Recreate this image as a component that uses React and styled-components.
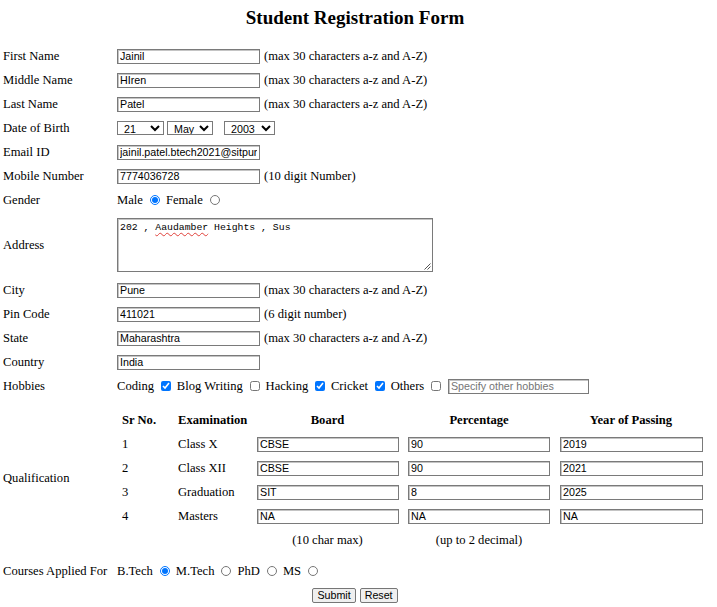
import styled, { createGlobalStyle } from "styled-components";

const GlobalStyle = createGlobalStyle`
  html, body {
    margin: 0;
    padding: 0;
    background: #ffffff;
  }

  body {
    font-family: "Liberation Serif", "Times New Roman", serif;
    font-size: 12.6px;
    color: #000000;
  }
`;

const nameHint = "(max 30 characters a-z and A-Z)";

const qualifications = [
  { no: 1, exam: "Class X", board: "CBSE", percent: "90", year: "2019" },
  { no: 2, exam: "Class XII", board: "CBSE", percent: "90", year: "2021" },
  { no: 3, exam: "Graduation", board: "SIT", percent: "8", year: "2025" },
  { no: 4, exam: "Masters", board: "NA", percent: "NA", year: "NA" },
];

function App() {
  return (
    <>
      <GlobalStyle />
      <Page>
        <Title>Student Registration Form</Title>
        <Form onSubmit={ev => ev.preventDefault()}>
          <Label>First Name</Label>
          <Field>
            <TextInput defaultValue="Jainil" />
            <Hint>{nameHint}</Hint>
          </Field>

          <Label>Middle Name</Label>
          <Field>
            <TextInput defaultValue="HIren" />
            <Hint>{nameHint}</Hint>
          </Field>

          <Label>Last Name</Label>
          <Field>
            <TextInput defaultValue="Patel" />
            <Hint>{nameHint}</Hint>
          </Field>

          <Label>Date of Birth</Label>
          <Field>
            <Select $width={47} defaultValue="21">
              <option>21</option>
            </Select>
            <Select $width={46} $left={3} defaultValue="May">
              <option>May</option>
            </Select>
            <Select $width={51} $left={11} defaultValue="2003">
              <option>2003</option>
            </Select>
          </Field>

          <Label>Email ID</Label>
          <Field>
            <TextInput defaultValue="jainil.patel.btech2021@sitpune.edu.in" />
          </Field>

          <Label>Mobile Number</Label>
          <Field>
            <TextInput defaultValue="7774036728" />
            <Hint>(10 digit Number)</Hint>
          </Field>

          <Label>Gender</Label>
          <Field>
            <Choice>Male</Choice>
            <Radio name="gender" defaultChecked />
            <Choice>Female</Choice>
            <Radio name="gender" />
          </Field>

          <Label>Address</Label>
          <Field $pad="6px 0">
            <AddressBox role="textbox">
              202 , <Misspelled>Aaudamber</Misspelled> Heights , Sus
              <Grip width="8" height="8" viewBox="0 0 8 8">
                <path d="M7.5 1.5 L1.5 7.5 M7.5 4.5 L4.5 7.5" stroke="#555" strokeWidth="1" />
              </Grip>
            </AddressBox>
          </Field>

          <Label>City</Label>
          <Field>
            <TextInput defaultValue="Pune" />
            <Hint>{nameHint}</Hint>
          </Field>

          <Label>Pin Code</Label>
          <Field>
            <TextInput defaultValue="411021" />
            <Hint>(6 digit number)</Hint>
          </Field>

          <Label>State</Label>
          <Field>
            <TextInput defaultValue="Maharashtra" />
            <Hint>{nameHint}</Hint>
          </Field>

          <Label>Country</Label>
          <Field>
            <TextInput defaultValue="India" />
          </Field>

          <Label>Hobbies</Label>
          <Field>
            <Choice>Coding</Choice>
            <Check defaultChecked />
            <Choice>Blog Writing</Choice>
            <Check />
            <Choice>Hacking</Choice>
            <Check defaultChecked />
            <Choice>Cricket</Choice>
            <Check defaultChecked />
            <Choice>Others</Choice>
            <Check />
            <TextInput $width={141} $left={1} placeholder="Specify other hobbies" />
          </Field>

          <Label>Qualification</Label>
          <Field $pad="10px 0 7px">
            <QualTable>
              <HeadCell>Sr No.</HeadCell>
              <HeadCell>Examination</HeadCell>
              <HeadCell $center>Board</HeadCell>
              <HeadCell $center>Percentage</HeadCell>
              <HeadCell $center>Year of Passing</HeadCell>
              {qualifications.map(row => (
                <QualRow key={row.no}>
                  <QualCell>{row.no}</QualCell>
                  <QualCell>{row.exam}</QualCell>
                  <QualCell>
                    <TextInput $width={142} defaultValue={row.board} />
                  </QualCell>
                  <QualCell>
                    <TextInput $width={142} defaultValue={row.percent} />
                  </QualCell>
                  <QualCell>
                    <TextInput $width={143} defaultValue={row.year} />
                  </QualCell>
                </QualRow>
              ))}
              <QualCell />
              <QualCell />
              <NoteCell>(10 char max)</NoteCell>
              <NoteCell>(up to 2 decimal)</NoteCell>
              <QualCell />
            </QualTable>
          </Field>

          <Label>Courses Applied For</Label>
          <Field>
            <Choice>B.Tech</Choice>
            <Radio name="course" defaultChecked />
            <Choice>M.Tech</Choice>
            <Radio name="course" />
            <Choice>PhD</Choice>
            <Radio name="course" />
            <Choice>MS</Choice>
            <Radio name="course" />
          </Field>

          <Actions>
            <Button type="submit">Submit</Button>
            <Button type="reset">Reset</Button>
          </Actions>
        </Form>
      </Page>
    </>
  );
}

const Page = styled.div`
  box-sizing: border-box;
  width: 707px;
  padding-left: 3px;
`;

const Title = styled.h2`
  box-sizing: border-box;
  height: 44px;
  margin: 0;
  padding-top: 8px;

  font-size: 19px;
  line-height: 20px;
  font-weight: bold;
  text-align: center;
`;

const Form = styled.form`
  display: grid;
  grid-template-columns: 114px 590px;
  grid-auto-rows: minmax(24px, auto);
  align-items: center;
`;

const Label = styled.div`
  white-space: nowrap;
`;

const Field = styled.div`
  display: flex;
  align-items: center;
  padding: ${props => props.$pad || "0"};
  white-space: nowrap;
`;

const TextInput = styled.input`
  box-sizing: border-box;
  width: ${props => props.$width || 143}px;
  height: 15px;
  margin: 0 0 0 ${props => props.$left || 0}px;
  padding: 0 2px;

  border: 1px solid #7a7a7a;
  box-shadow: inset 1px 1px 0 #c4c4c4;
  border-radius: 0;
  outline: none;

  font-family: "Liberation Sans", Arial, sans-serif;
  font-size: 10.7px;
  color: #000000;

  &::placeholder {
    color: #757575;
  }
`;

const Hint = styled.span`
  margin-left: 4px;
`;

const Select = styled.select`
  box-sizing: border-box;
  width: ${props => props.$width}px;
  height: 14px;
  margin: 0 0 0 ${props => props.$left || 0}px;
  padding: 0 0 0 2px;

  border: 1px solid #7a7a7a;
  border-radius: 0;
  background: #ffffff;

  font-family: "Liberation Sans", Arial, sans-serif;
  font-size: 10.7px;
  color: #000000;
`;

const Choice = styled.span`
  margin-right: 5px;
`;

const Radio = styled.input.attrs({ type: "radio" })`
  width: 10px;
  height: 10px;
  margin: 0 6px 0 2px;
  accent-color: #0075ff;
`;

const Check = styled.input.attrs({ type: "checkbox" })`
  width: 10px;
  height: 10px;
  margin: 0 6px 0 1.7px;
  accent-color: #0075ff;
`;

const AddressBox = styled.div`
  position: relative;
  box-sizing: border-box;
  width: 316px;
  height: 54px;
  padding: 3px 2px;

  border: 1px solid #7a7a7a;
  box-shadow: inset 1px 1px 0 #c4c4c4;

  font-family: "Liberation Mono", "Courier New", monospace;
  font-size: 9.8px;
  line-height: 12px;
  white-space: pre;
`;

const Misspelled = styled.span`
  text-decoration: underline wavy #e0403a;
  text-decoration-thickness: 1px;
  text-underline-offset: 2px;
`;

const Grip = styled.svg`
  position: absolute;
  right: 1px;
  bottom: 1px;
`;

const QualTable = styled.div`
  display: grid;
  grid-template-columns: 56px 79px 151px 152px 152px;
  grid-auto-rows: 24px;
  align-items: center;
`;

const QualRow = styled.div`
  display: contents;
`;

const HeadCell = styled.div`
  padding-left: ${props => (props.$center ? 0 : 5)}px;
  font-weight: bold;
  text-align: ${props => (props.$center ? "center" : "left")};
`;

const QualCell = styled.div`
  display: flex;
  align-items: center;
  padding-left: 5px;
`;

const NoteCell = styled.div`
  text-align: center;
`;

const Actions = styled.div`
  grid-column: 1 / -1;
  display: flex;
  justify-content: center;
  gap: 4px;
`;

const Button = styled.button`
  box-sizing: border-box;
  height: 15px;
  padding: 0 4px;

  border: 1px solid #767676;
  border-radius: 2px;
  background: #efefef;

  font-family: "Liberation Sans", Arial, sans-serif;
  font-size: 10.7px;
  line-height: 12px;
  color: #000000;
`;

export default App;
